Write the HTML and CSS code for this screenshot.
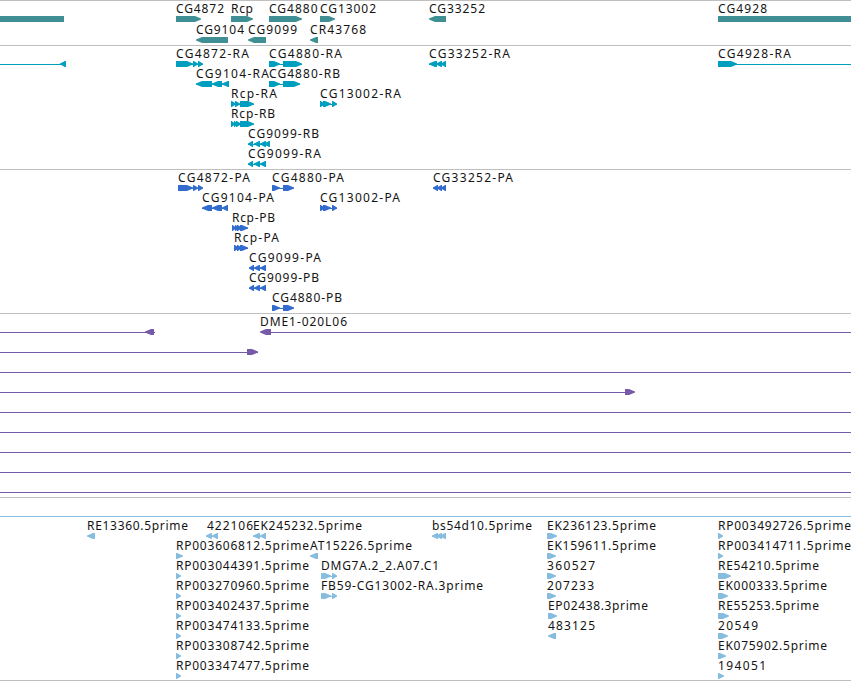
FILE: index.html
```html
<!DOCTYPE html>
<html lang="en">
<head>
<meta charset="utf-8">
<title>Genome tracks</title>
<link rel="stylesheet" href="styles.css">
</head>
<body>
<main class="browser">
<section class="track genes" id="genes"></section>
<section class="track transcripts" id="transcripts"></section>
<section class="track proteins" id="proteins"></section>
<section class="track clones" id="clones"></section>
<section class="track ests" id="ests"></section>
</main>
<script src="tracks.js"></script>
</body>
</html>
```
FILE: styles.css
```css
body {
  margin: 0;
  background: #fff;
}
.browser {
  display: flex;
  flex-direction: column;
  width: 851px;
  height: 681px;
  box-sizing: border-box;
  border-bottom: 1px solid #bfbfbf;
  overflow: hidden;
}
.track {
  box-sizing: border-box;
  border-top: 1px solid #bfbfbf;
  flex: none;
}
.track svg {
  display: block;
  width: 851px;
  height: 100%;
}
.track text {
  font-family: "Noto Sans", "Open Sans", sans-serif;
  font-size: 12px;
  fill: #141414;
}
.genes { height: 45px; fill: #3f8f94; }
.transcripts { height: 124px; fill: #009ebf; }
.proteins { height: 144px; fill: #326dcd; }
.clones { height: 184px; fill: #775aa7; }
.ests { height: 183px; fill: #86bcde; }
```
FILE: tracks.js
```js
// Feature: [row, label, label start, label end, strand, exons, [line start, line end]]
const tracks = {
  genes: { first: 12, pitch: 21, features: [
    [0, "", 0, 0, 0, [[0, 64]]],
    [0, "CG4872", 176, 224, 1, [[176, 201]]],
    [0, "Rcp", 231, 253, 1, [[231, 253]]],
    [0, "CG4880", 269, 317.5, 1, [[269, 302]]],
    [0, "CG13002", 320, 376, 1, [[320, 335]]],
    [0, "CG33252", 429, 485, -1, [[429, 446]]],
    [0, "CG4928", 718, 767, 0, [[718, 851]]],
    [1, "CG9104", 196, 244, -1, [[196, 228]]],
    [1, "CG9099", 248, 297, -1, [[248, 266]]],
    [1, "CR43768", 310, 366, -1, [[310, 318]]]
  ]},
  transcripts: { first: 12, pitch: 20, features: [
    [0, "", 0, 0, -1, [[60, 66]], [0, 62]],
    [0, "CG4872-RA", 176, 249, 1, [[176, 193], [193, 198], [198, 203]]],
    [0, "CG4880-RA", 269, 342, 1, [[269, 280], [283, 302]]],
    [0, "CG33252-RA", 429, 510, -1, [[429, 437], [436, 442], [441, 446]]],
    [0, "CG4928-RA", 718, 791, 1, [[718, 737]], [718, 851]],
    [1, "CG9104-RA", 196, 269, -1, [[196, 212], [212, 222], [222, 229]]],
    [1, "CG4880-RB", 269, 340, 1, [[269, 280], [283, 300]]],
    [2, "Rcp-RA", 231, 277, 1, [[231, 236], [235, 240], [240, 254]]],
    [2, "CG13002-RA", 320, 401, 1, [[320, 325], [323, 331], [332, 337]]],
    [3, "Rcp-RB", 231, 275, 1, [[231, 235], [234, 238], [236, 241], [240, 254]]],
    [4, "CG9099-RB", 248, 319, -1, [[248, 253], [254, 260], [260, 266], [264, 270]]],
    [5, "CG9099-RA", 248, 321, -1, [[248, 253], [254, 260], [260, 266]]]
  ]},
  proteins: { first: 12, pitch: 20, features: [
    [0, "CG4872-PA", 178, 250, 1, [[178, 193], [193, 198], [198, 203]]],
    [0, "CG4880-PA", 272, 344, 1, [[272, 280], [283, 294]]],
    [0, "CG33252-PA", 433, 513, -1, [[433, 438], [437, 442], [441, 446]]],
    [1, "CG9104-PA", 202, 274, -1, [[202, 212], [212, 222], [222, 228]]],
    [1, "CG13002-PA", 320, 400, 1, [[320, 325], [323, 331], [332, 337]]],
    [2, "Rcp-PB", 232, 275, 1, [[232, 236], [235, 239], [237, 242], [240, 248]]],
    [3, "Rcp-PA", 234, 279, 1, [[234, 239], [237, 242], [240, 248]]],
    [4, "CG9099-PA", 249, 321, -1, [[249, 254], [254, 260], [260, 266]]],
    [5, "CG9099-PB", 249, 319, -1, [[249, 254], [254, 260], [260, 266]]],
    [6, "CG4880-PB", 272, 342, 1, [[272, 280], [283, 294]]]
  ]},
  clones: { first: 12, pitch: 20, features: [
    [0, "", 0, 0, -1, [[145, 154]], [0, 155]],
    [0, "DME1-020L06", 260, 347, -1, [[260, 271]], [261, 851]],
    [1, "", 0, 0, 1, [[247, 258]], [0, 258]],
    [2, "", 0, 0, 1, [], [0, 851]],
    [3, "", 0, 0, 1, [[625, 635]], [0, 634]],
    [4, "", 0, 0, 1, [], [0, 851]],
    [5, "", 0, 0, 1, [], [0, 851]],
    [6, "", 0, 0, 1, [], [0, 851]],
    [7, "", 0, 0, 1, [], [0, 851]],
    [8, "", 0, 0, 1, [], [0, 851]]
  ]},
  ests: { first: 32, pitch: 20, features: [
    [-1, "", 0, 0, 1, [], [0, 851]],
    [0, "RE13360.5prime", 87, 188, -1, [[87, 95]]],
    [0, "422106", 207, 253, -1, [[206, 212], [212, 218]]],
    [0, "EK245232.5prime", 253, 362, -1, [[253, 260], [260, 266]]],
    [0, "bs54d10.5prime", 432, 532, -1, [[432, 438], [436, 442], [440, 446]]],
    [0, "EK236123.5prime", 547, 656, 1, [[547, 557]]],
    [0, "RP003492726.5prime", 718, 851, 1, [[718, 723]]],
    [1, "RP003606812.5prime", 176, 309, 1, [[176, 183]]],
    [1, "AT15226.5prime", 310, 412, -1, [[310, 318]]],
    [1, "EK159611.5prime", 547, 656, 1, [[547, 556]]],
    [1, "RP003414711.5prime", 718, 851, 1, [[718, 723]]],
    [2, "RP003044391.5prime", 176, 309, 1, [[176, 181]]],
    [2, "DMG7A.2_2.A07.C1", 321, 439, 1, [[321, 327], [323, 331], [332, 337]]],
    [2, "360527", 547, 595, 1, [[547, 556]]],
    [2, "RE54210.5prime", 718, 819, 1, [[718, 731]]],
    [3, "RP003270960.5prime", 176, 309, 1, [[176, 181]]],
    [3, "FB59-CG13002-RA.3prime", 321, 483, 1, [[321, 327], [323, 331], [332, 337]]],
    [3, "207233", 547, 594, 1, [[547, 556]]],
    [3, "EK000333.5prime", 718, 827, 1, [[718, 728]]],
    [4, "RP003402437.5prime", 176, 309, 1, [[176, 181]]],
    [4, "EP02438.3prime", 548, 648, 1, [[548, 557]]],
    [4, "RE55253.5prime", 718, 819, 1, [[718, 729]]],
    [5, "RP003474133.5prime", 176, 309, 1, [[176, 181]]],
    [5, "483125", 548, 595, -1, [[548, 556]]],
    [5, "20549", 718, 758, 1, [[718, 728]]],
    [6, "RP003308742.5prime", 176, 309, 1, [[176, 181]]],
    [6, "EK075902.5prime", 718, 827, 1, [[718, 726]]],
    [7, "RP003347477.5prime", 176, 309, 1, [[176, 181]]],
    [7, "194051", 718, 766, 1, [[718, 724]]]
  ]}
};

// An exon is a bar whose end tapers in the direction of its strand.
function exon([a, b], strand, y) {
  if (!strand) return `M${a} ${y}H${b}V${y + 6}H${a}Z`;
  const tip = Math.min((b - a) * 0.85, 6);
  const [tail, head] = strand > 0 ? [a, b] : [b, a];
  const shoulder = head - strand * tip;
  const cheek = head - strand * tip * 0.4;
  return `M${tail} ${y}H${shoulder}L${cheek} ${y + 1.5}L${head} ${y + 2.5}` +
    `V${y + 3.5}L${cheek} ${y + 4.5}L${shoulder} ${y + 6}H${tail}Z`;
}

for (const [id, track] of Object.entries(tracks)) {
  let out = "";
  for (const [row, label, x, end, strand, exons, span] of track.features) {
    const base = track.first + row * track.pitch;
    const y = base + 3;
    if (label) {
      out += `<text x="${x}" y="${base}" textLength="${end - x}">${label}</text>`;
    }
    const line = span || (exons.length > 1 ? [exons[0][0], exons[exons.length - 1][1]] : null);
    if (line) {
      out += `<rect x="${line[0]}" y="${y + 3}" width="${line[1] - line[0]}" height="1"/>`;
    }
    for (const e of exons) out += `<path d="${exon(e, strand, y)}"/>`;
  }
  document.getElementById(id).innerHTML = `<svg>${out}</svg>`;
}
```
